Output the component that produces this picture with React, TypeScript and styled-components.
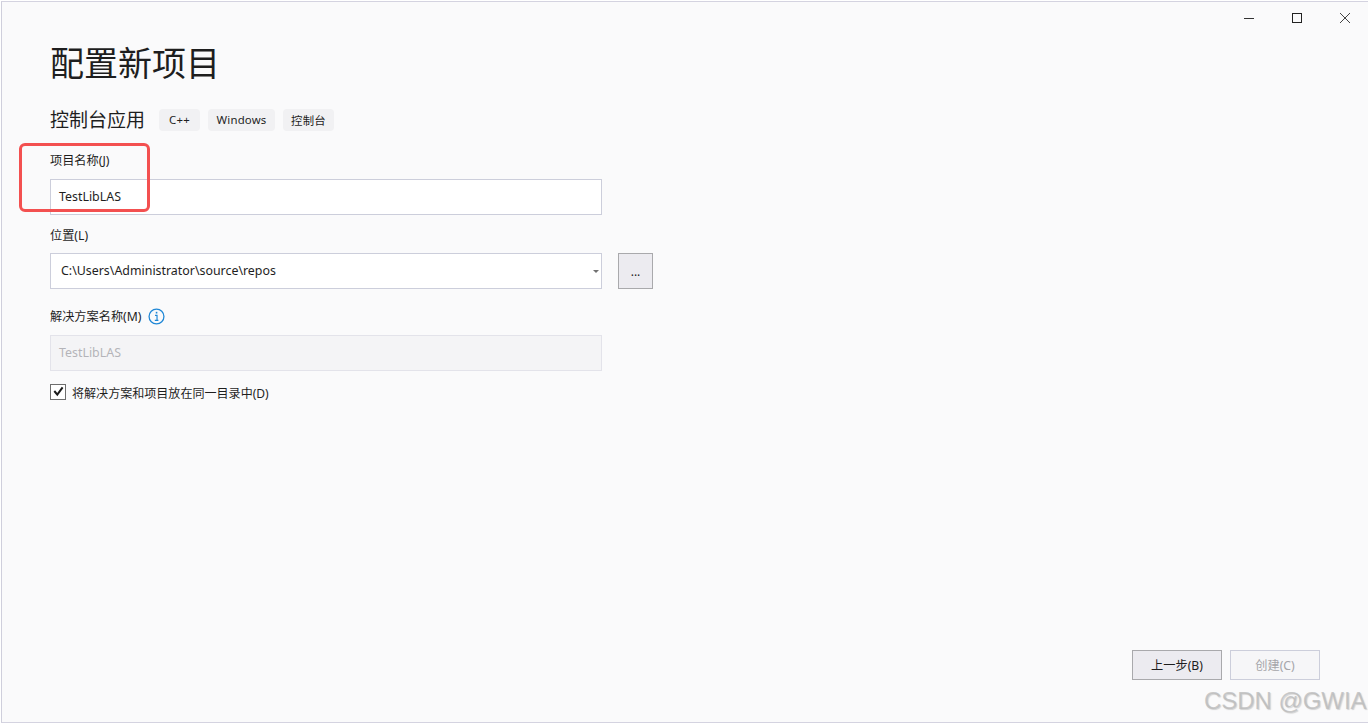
import React from "react";
import styled, { createGlobalStyle } from "styled-components";

const GlobalStyle = createGlobalStyle`
  html, body {
    margin: 0;
    padding: 0;
    background: #ffffff;
  }
  body {
    font-family: "Noto Sans", "Noto Sans CJK SC", sans-serif;
    overflow: hidden;
  }
`;

const App: React.FC = () => {
  return (
    <Screen>
      <GlobalStyle />
      <Window>
        <TitleBar>
          <WindowButton aria-label="minimize">
            <svg width="12" height="12" viewBox="0 0 12 12">
              <path d="M1 6.5h10" stroke="#333" strokeWidth="1" />
            </svg>
          </WindowButton>
          <WindowButton aria-label="maximize">
            <svg width="12" height="12" viewBox="0 0 12 12">
              <rect x="1.5" y="1.5" width="9" height="9" fill="none" stroke="#222" strokeWidth="1" />
            </svg>
          </WindowButton>
          <WindowButton aria-label="close">
            <svg width="12" height="12" viewBox="0 0 12 12">
              <path d="M1 1l10 10M11 1L1 11" stroke="#444" strokeWidth="1" />
            </svg>
          </WindowButton>
        </TitleBar>

        <Content>
          <Title>配置新项目</Title>

          <TemplateRow>
            <TemplateName>控制台应用</TemplateName>
            <Chips>
              <Chip $width={41}>C++</Chip>
              <Chip $width={67}>Windows</Chip>
              <Chip $width={51}>控制台</Chip>
            </Chips>
          </TemplateRow>

          <Label $top={19} $bottom={10}>项目名称(J)</Label>
          <TextBox>TestLibLAS</TextBox>

          <Label $top={11} $bottom={9}>位置(L)</Label>
          <BrowseRow>
            <ComboBox>
              C:\Users\Administrator\source\repos
              <ComboArrow />
            </ComboBox>
            <BrowseButton>...</BrowseButton>
          </BrowseRow>

          <Label $top={18} $bottom={10}>
            解决方案名称(M)
            <InfoIcon viewBox="0 0 16 16">
              <circle cx="8" cy="8" r="7" fill="none" stroke="#1f87d6" strokeWidth="1.2" />
              <rect x="7.3" y="3.6" width="1.5" height="1.6" fill="#1f87d6" />
              <path d="M6.6 6.9h1.9v4.6M6.4 11.6h3.4" fill="none" stroke="#1f87d6" strokeWidth="1.1" />
            </InfoIcon>
          </Label>
          <TextBox $disabled>TestLibLAS</TextBox>

          <CheckRow>
            <CheckBox>
              <svg width="14" height="14" viewBox="0 0 14 14">
                <path d="M3.3 6l3 3.6L11.6 2.4" fill="none" stroke="#1b1b1b" strokeWidth="2" />
              </svg>
            </CheckBox>
            <CheckLabel>将解决方案和项目放在同一目录中(D)</CheckLabel>
          </CheckRow>
        </Content>

        <Footer>
          <FooterButton>上一步(B)</FooterButton>
          <FooterButton $disabled>创建(C)</FooterButton>
        </Footer>
      </Window>

      <Highlight />
      <Watermark>CSDN @GWIA</Watermark>
    </Screen>
  );
};

export default App;

const Screen = styled.div`
  position: relative;
  width: 1368px;
  height: 724px;
  padding: 1px 0 1px 1px;
  box-sizing: border-box;
  background: #ffffff;
  overflow: hidden;
`;

const Window = styled.div`
  height: 100%;
  box-sizing: border-box;
  display: flex;
  flex-direction: column;
  background: #fafafb;
  border-top: 1px solid #d4d3e0;
  border-left: 1px solid #cfcfdc;
  border-bottom: 1px solid #d4d3e0;
`;

const TitleBar = styled.div`
  display: flex;
  justify-content: flex-end;
  height: 32px;
  margin-right: -1px;
`;

const WindowButton = styled.div`
  width: 48px;
  height: 32px;
  display: flex;
  align-items: center;
  justify-content: center;
`;

const Content = styled.div`
  flex: 1;
  display: flex;
  flex-direction: column;
  padding-left: 48px;
  color: #1e1e1e;
`;

const Title = styled.div`
  font-size: 34px;
  line-height: 44px;
  margin-top: 7px;
  color: #1e1e1e;
`;

const TemplateRow = styled.div`
  display: flex;
  align-items: center;
  height: 24px;
  margin-top: 23px;
`;

const TemplateName = styled.div`
  font-size: 19px;
  line-height: 24px;
  width: 109px;
`;

const Chips = styled.div`
  display: flex;
  gap: 8px;
`;

const Chip = styled.div<{ $width: number }>`
  width: ${(p) => p.$width}px;
  height: 22px;
  padding-bottom: 1px;
  box-sizing: border-box;
  display: flex;
  align-items: center;
  justify-content: center;
  border-radius: 4px;
  background: #f1f1f3;
  font-size: 11.4px;
  letter-spacing: 0.2px;
  color: #1e1e1e;
`;

const Label = styled.div<{ $top: number; $bottom: number }>`
  display: flex;
  align-items: center;
  height: 18px;
  margin-top: ${(p) => p.$top}px;
  margin-bottom: ${(p) => p.$bottom}px;
  font-size: 12.2px;
  color: #1e1e1e;
`;

const TextBox = styled.div<{ $disabled?: boolean }>`
  width: 552px;
  height: 36px;
  box-sizing: border-box;
  display: flex;
  align-items: center;
  padding: 0 0 2px 8px;
  font-size: 12.4px;
  border: 1px solid ${(p) => (p.$disabled ? "#e3e3ea" : "#cccedb")};
  background: ${(p) => (p.$disabled ? "#f4f4f6" : "#ffffff")};
  color: ${(p) => (p.$disabled ? "#b4b4b9" : "#1e1e1e")};
`;

const BrowseRow = styled.div`
  display: flex;
  gap: 16px;
`;

const ComboBox = styled.div`
  position: relative;
  width: 552px;
  height: 36px;
  box-sizing: border-box;
  display: flex;
  align-items: center;
  padding: 0 0 2px 10px;
  font-size: 12.4px;
  border: 1px solid #cccedb;
  background: #ffffff;
`;

const ComboArrow = styled.span`
  position: absolute;
  right: 2px;
  top: 16px;
  width: 0;
  height: 0;
  border-left: 3px solid transparent;
  border-right: 3px solid transparent;
  border-top: 3px solid #717171;
`;

const BrowseButton = styled.div`
  width: 35px;
  height: 36px;
  box-sizing: border-box;
  display: flex;
  align-items: center;
  justify-content: center;
  padding-top: 1px;
  font-size: 12px;
  border: 1px solid #a9a9ac;
  background: #ecebf0;
`;

const InfoIcon = styled.svg`
  width: 17px;
  height: 17px;
  margin-left: 6px;
`;

const CheckRow = styled.div`
  display: flex;
  align-items: center;
  margin-top: 13px;
  height: 16px;
`;

const CheckBox = styled.div`
  width: 16px;
  height: 16px;
  box-sizing: border-box;
  display: flex;
  align-items: center;
  justify-content: center;
  border: 1px solid #6d6d6d;
  background: #ffffff;
`;

const CheckLabel = styled.div`
  margin: 2px 0 0 6px;
  font-size: 12.05px;
  color: #1e1e1e;
`;

const Footer = styled.div`
  display: flex;
  justify-content: flex-end;
  gap: 8px;
  padding: 0 48px 42px 0;
`;

const FooterButton = styled.div<{ $disabled?: boolean }>`
  width: 90px;
  height: 30px;
  box-sizing: border-box;
  display: flex;
  align-items: center;
  justify-content: center;
  padding-bottom: 1px;
  font-size: 12.2px;
  border: 1px solid ${(p) => (p.$disabled ? "#cccedb" : "#a9a9ac")};
  background: ${(p) => (p.$disabled ? "#f6f6f8" : "#ecebf0")};
  color: ${(p) => (p.$disabled ? "#a5a5a9" : "#1e1e1e")};
`;

const Highlight = styled.div`
  position: absolute;
  left: 19px;
  top: 143px;
  width: 131px;
  height: 69px;
  box-sizing: border-box;
  border: 3.5px solid #f35050;
  border-radius: 6px;
  pointer-events: none;
`;

const Watermark = styled.div`
  position: absolute;
  left: 1204px;
  top: 686px;
  font-family: "Liberation Sans", Arial, sans-serif;
  font-size: 24px;
  line-height: 29px;
  letter-spacing: -0.05px;
  white-space: nowrap;
  color: rgba(185, 185, 185, 0.75);
  text-shadow: 1px 1px 1px rgba(150, 150, 150, 0.4);
`;
